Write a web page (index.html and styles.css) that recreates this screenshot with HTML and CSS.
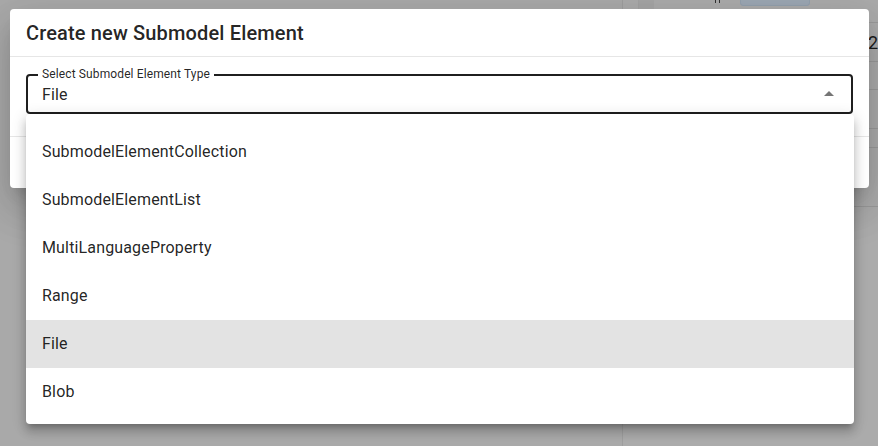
FILE: index.html
```html
<!DOCTYPE html>
<html lang="en">
<head>
<meta charset="utf-8">
<title>Create new Submodel Element</title>
<link rel="stylesheet" href="styles.css">
</head>
<body>
<div class="page">
  <div class="page-main"></div>
  <div class="page-side">
    <div class="side-row row-a">
      <div class="side-cell c1"></div>
      <div class="side-cell c2"></div>
      <span class="mark"></span>
      <span class="side-btn"></span>
    </div>
    <div class="side-row row-b"><span class="num">2</span></div>
    <div class="side-row row-c"></div>
    <div class="side-row row-d"></div>
    <div class="side-row row-e"></div>
    <div class="side-row row-f"></div>
  </div>
</div>

<div class="dialog">
  <h2 class="dialog-title">Create new Submodel Element</h2>
  <div class="dialog-content">
    <div class="select">
      <span class="select-label">Select Submodel Element Type</span>
      <span class="select-value">File</span>
      <svg class="select-icon" viewBox="0 0 24 24" width="24" height="24" aria-hidden="true"><path d="M7 14l5-5 5 5z"/></svg>
    </div>
  </div>
  <div class="dialog-actions"></div>
</div>

<ul class="menu">
  <li class="menu-item">SubmodelElementCollection</li>
  <li class="menu-item">SubmodelElementList</li>
  <li class="menu-item">MultiLanguageProperty</li>
  <li class="menu-item">Range</li>
  <li class="menu-item selected">File</li>
  <li class="menu-item">Blob</li>
</ul>
</body>
</html>
```

FILE: styles.css
```css
* { box-sizing: border-box; }

html, body {
  margin: 0;
  padding: 0;
}

body {
  width: 878px;
  height: 446px;
  overflow: hidden;
  position: relative;
  background: #aaaaaa;
  font-family: Roboto, "Noto Sans", "Liberation Sans", sans-serif;
  color: rgba(0, 0, 0, 0.87);
}

/* dimmed page behind the dialog */
.page {
  display: flex;
  height: 446px;
}

.page-main {
  width: 623px;
  border-right: 1px solid #9e9e9e;
  background: #a9a9a9;
}

.page-side {
  flex: 1;
  display: flex;
  flex-direction: column;
  background: #ababab;
}

.side-row {
  border-bottom: 1px solid #9a9a9a;
  position: relative;
}

.row-a {
  height: 23px;
  display: flex;
}
.side-cell {
  height: 100%;
}
.c1 {
  width: 16px;
  border-right: 1px solid #a2a2a2;
}
.c2 {
  width: 15px;
  background: #a5a5a5;
}
.mark {
  position: absolute;
  left: 92px;
  top: 0;
  width: 5px;
  height: 3px;
  border-left: 1px solid #333;
  border-right: 1px solid #333;
}
.side-btn {
  position: absolute;
  left: 117px;
  top: -4px;
  width: 70px;
  height: 10px;
  border-radius: 3px;
  background: #9ca7b3;
  border: 1px solid #93a0ad;
}

.row-b { height: 39px; }
.row-c { height: 28px; }
.row-d { height: 39px; }
.row-e { height: 19px; }
.row-f { height: 59px; }

.num {
  position: absolute;
  left: 245px;
  top: 9px;
  font-size: 18px;
  color: #1a1a1a;
}

/* dialog */
.dialog {
  position: absolute;
  left: 10px;
  top: 9px;
  width: 859px;
  height: 179px;
  background: #fff;
  border-radius: 4px;
  box-shadow: 0 11px 15px -7px rgba(0,0,0,0.16), 0 24px 38px 3px rgba(0,0,0,0.1), 0 9px 46px 8px rgba(0,0,0,0.08);
  display: flex;
  flex-direction: column;
}

.dialog-title {
  margin: 0;
  padding: 12px 16px;
  height: 48px;
  font-size: 20px;
  line-height: 24px;
  font-weight: 500;
  letter-spacing: 0.15px;
  color: rgba(0, 0, 0, 0.87);
  border-bottom: 1px solid #e6e6e6;
}

.dialog-content {
  padding: 17px 16px 22px;
  border-bottom: 1px solid #e6e6e6;
}

.select {
  position: relative;
  height: 40px;
  border: 2px solid #1f1f1f;
  border-radius: 4px;
  display: flex;
  align-items: center;
  padding: 0 14px;
}

.select-label {
  position: absolute;
  left: 10px;
  top: -9px;
  padding: 0 4px;
  background: #fff;
  font-size: 12px;
  line-height: 14px;
  letter-spacing: 0.12px;
  color: rgba(0, 0, 0, 0.87);
}

.select-value {
  font-size: 16px;
  line-height: 20px;
  margin-top: 1px;
  letter-spacing: 0.15px;
  color: rgba(0, 0, 0, 0.87);
}

.select-icon {
  position: absolute;
  right: 10px;
  top: 6px;
  fill: rgba(0, 0, 0, 0.54);
}

.dialog-actions {
  flex: 1;
}

/* dropdown menu */
.menu {
  position: absolute;
  left: 26px;
  top: 114px;
  width: 828px;
  height: 310px;
  margin: 0;
  padding: 14px 0 8px;
  list-style: none;
  background: #fff;
  border-radius: 4px;
  box-shadow: 0 5px 5px -3px rgba(0,0,0,0.2), 0 8px 10px 1px rgba(0,0,0,0.14), 0 3px 14px 2px rgba(0,0,0,0.12);
}

.menu-item {
  height: 48px;
  display: flex;
  align-items: center;
  padding: 0 16px;
  font-size: 16px;
  line-height: 24px;
  letter-spacing: 0.15px;
  color: rgba(0, 0, 0, 0.87);
}

.menu-item.selected {
  background: #e3e3e3;
}
```
